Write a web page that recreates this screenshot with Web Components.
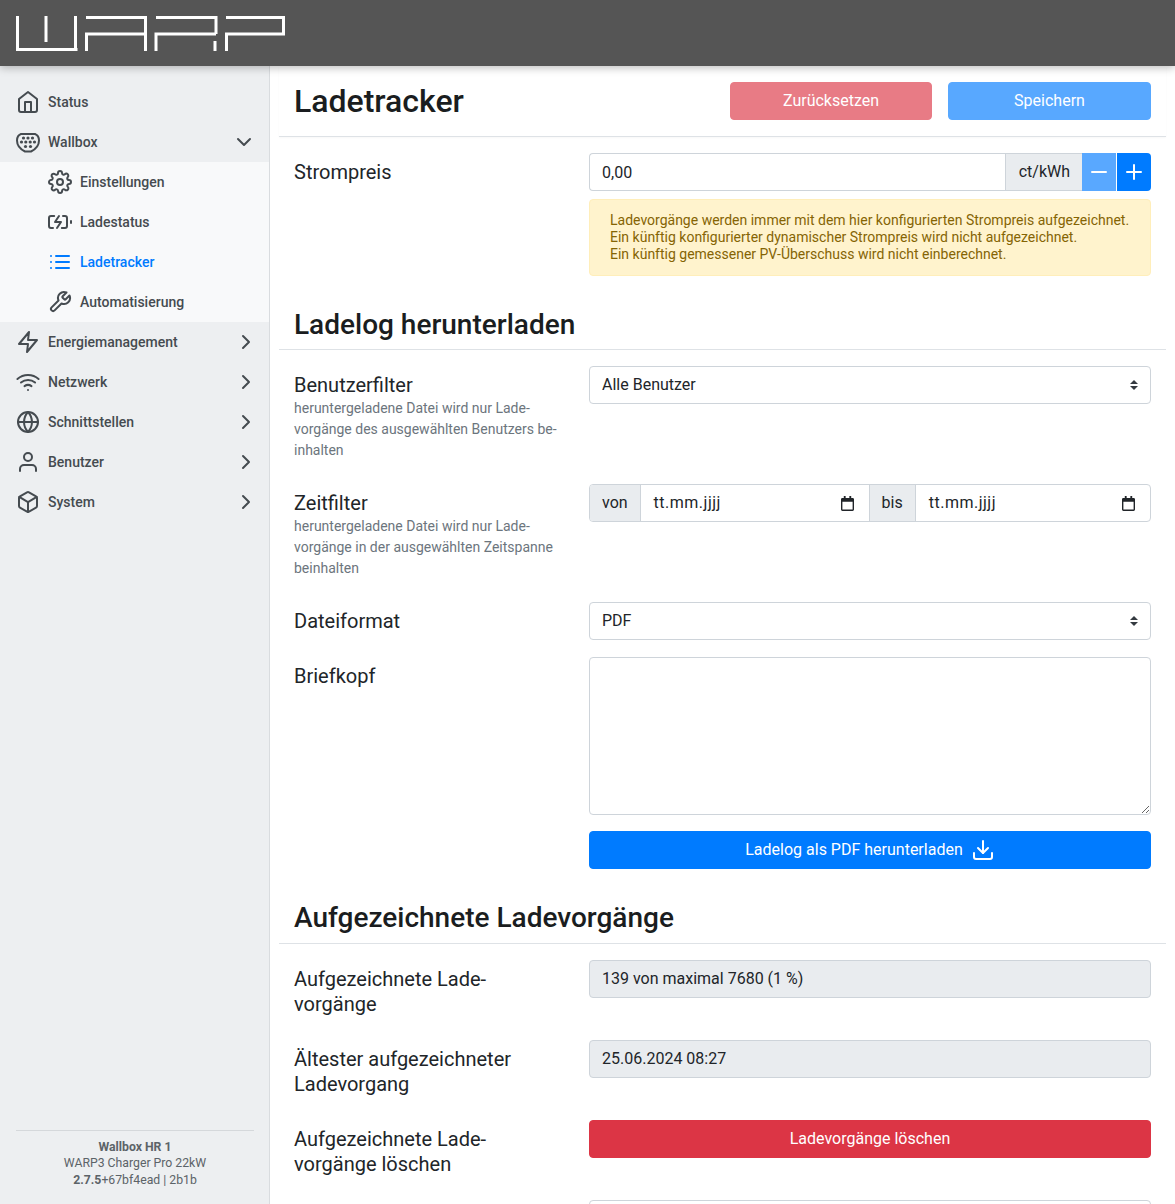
<!DOCTYPE html>
<html lang="de">
<head>
<meta charset="utf-8">
<title>Ladetracker</title>
<style>
  html, body { margin: 0; height: 100%; }
  body {
    display: flex;
    flex-direction: column;
    height: 100vh;
    overflow: hidden;
    font-family: Roboto, "Liberation Sans", sans-serif;
    font-size: 16px;
    color: #212529;
    background: #fff;
  }
  .layout { display: flex; flex: 1; min-height: 0; }
</style>
</head>
<body>
  <app-header></app-header>
  <div class="layout">
    <side-bar>
      <nav-item icon="home">Status</nav-item>
      <nav-item icon="plug" chevron="down">Wallbox</nav-item>
      <nav-group>
        <nav-item icon="settings" sub>Einstellungen</nav-item>
        <nav-item icon="battery" sub>Ladestatus</nav-item>
        <nav-item icon="list" sub active>Ladetracker</nav-item>
        <nav-item icon="tool" sub>Automatisierung</nav-item>
      </nav-group>
      <nav-item icon="zap" chevron="right">Energiemanagement</nav-item>
      <nav-item icon="wifi" chevron="right">Netzwerk</nav-item>
      <nav-item icon="globe" chevron="right">Schnittstellen</nav-item>
      <nav-item icon="user" chevron="right">Benutzer</nav-item>
      <nav-item icon="box" chevron="right">System</nav-item>
      <side-footer slot="footer"></side-footer>
    </side-bar>
    <main-panel>
      <page-title title="Ladetracker"></page-title>
      <form-row label="Strompreis">
        <price-input></price-input>
        <warn-box>
          Ladevorgänge werden immer mit dem hier konfigurierten Strompreis aufgezeichnet.<br>
          Ein künftig konfigurierter dynamischer Strompreis wird nicht aufgezeichnet.<br>
          Ein künftig gemessener PV-Überschuss wird nicht einberechnet.
        </warn-box>
      </form-row>

      <section-head>Ladelog herunterladen</section-head>
      <form-row label="Benutzerfilter" help="heruntergeladene Datei wird nur Lade&shy;vorgänge des ausgewählten Benutzers be&shy;inhalten">
        <select-box value="Alle Benutzer"></select-box>
      </form-row>
      <form-row label="Zeitfilter" help="heruntergeladene Datei wird nur Lade&shy;vorgänge in der ausgewählten Zeitspanne beinhalten">
        <date-range></date-range>
      </form-row>
      <form-row label="Dateiformat">
        <select-box value="PDF"></select-box>
      </form-row>
      <form-row label="Briefkopf">
        <text-box></text-box>
      </form-row>
      <form-row>
        <action-button kind="primary" icon="download">Ladelog als PDF herunterladen</action-button>
      </form-row>

      <section-head>Aufgezeichnete Ladevorgänge</section-head>
      <form-row label="Aufgezeichnete Lade&shy;vorgänge">
        <read-field>139 von maximal 7680 (1 %)</read-field>
      </form-row>
      <form-row label="Ältester aufgezeichneter Ladevorgang">
        <read-field>25.06.2024 08:27</read-field>
      </form-row>
      <form-row label="Aufgezeichnete Lade&shy;vorgänge löschen">
        <action-button kind="danger">Ladevorgänge löschen</action-button>
      </form-row>
      <form-row>
        <read-field blank></read-field>
      </form-row>
    </main-panel>
  </div>

<script>
  const ICONS = {
    home: '<path d="M3 9l9-7 9 7v11a2 2 0 0 1-2 2H5a2 2 0 0 1-2-2z"/><polyline points="9 22 9 12 15 12 15 22"/>',
    plug: '<path d="M5 4h14c2.500 1 4 3.500 4 6.500 0 5-4 9-8 11H9c-4-2-8-6-8-11C1 7.500 2.500 5 5 4z"/>' +
      '<g fill="currentColor" stroke="none"><circle cx="7.500" cy="8" r="1.600"/><circle cx="12" cy="8" r="1.600"/><circle cx="16.500" cy="8" r="1.600"/><circle cx="5.500" cy="12" r="1.600"/><circle cx="9.800" cy="12" r="1.600"/><circle cx="14.200" cy="12" r="1.600"/><circle cx="18.500" cy="12" r="1.600"/><circle cx="9.500" cy="16.500" r="1.600"/><circle cx="14.500" cy="16.500" r="1.600"/></g>',
    settings: '<circle cx="12" cy="12" r="3"/><path d="M19.4 15a1.65 1.65 0 0 0 .33 1.82l.06.06a2 2 0 0 1 0 2.83 2 2 0 0 1-2.83 0l-.06-.06a1.65 1.65 0 0 0-1.82-.33 1.65 1.65 0 0 0-1 1.51V21a2 2 0 0 1-2 2 2 2 0 0 1-2-2v-.09A1.65 1.65 0 0 0 9 19.4a1.65 1.65 0 0 0-1.82.33l-.06.06a2 2 0 0 1-2.83 0 2 2 0 0 1 0-2.83l.06-.06a1.65 1.65 0 0 0 .33-1.82 1.65 1.65 0 0 0-1.51-1H3a2 2 0 0 1-2-2 2 2 0 0 1 2-2h.09A1.65 1.65 0 0 0 4.600 9a1.65 1.65 0 0 0-.33-1.82l-.06-.06a2 2 0 0 1 0-2.83 2 2 0 0 1 2.83 0l.06.06a1.65 1.65 0 0 0 1.82.33H9a1.65 1.65 0 0 0 1-1.51V3a2 2 0 0 1 2-2 2 2 0 0 1 2 2v.09a1.65 1.65 0 0 0 1 1.51 1.65 1.65 0 0 0 1.82-.33l.06-.06a2 2 0 0 1 2.83 0 2 2 0 0 1 0 2.83l-.06.06a1.65 1.65 0 0 0-.33 1.82V9a1.65 1.65 0 0 0 1.51 1H21a2 2 0 0 1 2 2 2 2 0 0 1-2 2h-.09a1.65 1.65 0 0 0-1.51 1z"/>',
    battery: '<path d="M5 18H3a2 2 0 0 1-2-2V8a2 2 0 0 1 2-2h3.190M15 6h2a2 2 0 0 1 2 2v8a2 2 0 0 1-2 2h-3.190"/><line x1="23" y1="13" x2="23" y2="11"/><polyline points="11 6 7 12 13 12 9 18"/>',
    list: '<line x1="8" y1="6" x2="21" y2="6"/><line x1="8" y1="12" x2="21" y2="12"/><line x1="8" y1="18" x2="21" y2="18"/><line x1="3" y1="6" x2="3.010" y2="6"/><line x1="3" y1="12" x2="3.010" y2="12"/><line x1="3" y1="18" x2="3.010" y2="18"/>',
    tool: '<path d="M14.700 6.300a1 1 0 0 0 0 1.400l1.600 1.600a1 1 0 0 0 1.400 0l3.770-3.770a6 6 0 0 1-7.940 7.940l-6.910 6.910a2.120 2.120 0 0 1-3-3l6.910-6.910a6 6 0 0 1 7.940-7.940l-3.760 3.760z"/>',
    zap: '<polygon points="13 2 3 14 12 14 11 22 21 10 12 10 13 2"/>',
    wifi: '<path d="M5 12.550a11 11 0 0 1 14.080 0"/><path d="M1.420 9a16 16 0 0 1 21.160 0"/><path d="M8.530 16.110a6 6 0 0 1 6.950 0"/><line x1="12" y1="20" x2="12.010" y2="20"/>',
    globe: '<circle cx="12" cy="12" r="10"/><line x1="2" y1="12" x2="22" y2="12"/><path d="M12 2a15.300 15.300 0 0 1 4 10 15.300 15.300 0 0 1-4 10 15.300 15.300 0 0 1-4-10 15.300 15.300 0 0 1 4-10z"/>',
    user: '<path d="M20 21v-2a4 4 0 0 0-4-4H8a4 4 0 0 0-4 4v2"/><circle cx="12" cy="7" r="4"/>',
    box: '<path d="M21 16V8a2 2 0 0 0-1-1.730l-7-4a2 2 0 0 0-2 0l-7 4A2 2 0 0 0 3 8v8a2 2 0 0 0 1 1.730l7 4a2 2 0 0 0 2 0l7-4A2 2 0 0 0 21 16z"/><polyline points="3.270 6.960 12 12.010 20.730 6.960"/><line x1="12" y1="22.080" x2="12" y2="12"/>',
    right: '<polyline points="9 18 15 12 9 6"/>',
    down: '<polyline points="6 9 12 15 18 9"/>',
    minus: '<line x1="5" y1="12" x2="19" y2="12"/>',
    plus: '<line x1="12" y1="5" x2="12" y2="19"/><line x1="5" y1="12" x2="19" y2="12"/>',
    download: '<path d="M21 15v4a2 2 0 0 1-2 2H5a2 2 0 0 1-2-2v-4"/><polyline points="7 10 12 15 17 10"/><line x1="12" y1="15" x2="12" y2="3"/>'
  };

  const icon = (name) => `<svg width="24" height="24" viewBox="0 0 24 24" fill="none" stroke="currentColor"
    stroke-width="2" stroke-linecap="round" stroke-linejoin="round">${ICONS[name]}</svg>`;

  // small base class, every element just renders once into its shadow root
  class ShadowEl extends HTMLElement {
    constructor() {
      super();
      this.attachShadow({ mode: "open" });
    }
    connectedCallback() {
      this.shadowRoot.innerHTML = this.template();
    }
  }

  class AppHeader extends ShadowEl {
    template() {
      return `
        <style>
          :host {
            display: flex;
            align-items: flex-start;
            flex: none;
            height: 66px;
            background: #555;
            box-shadow: 0 2px 8px rgba(0, 0, 0, .25);
            position: relative;
            z-index: 2;
          }
          svg { margin: 15px 0 0 16px; display: block; }
        </style>
        <svg width="270" height="37" viewBox="0 0 270 37" fill="none" stroke="#fff" stroke-width="3" aria-label="WARP">
          <path d="M1.500 1v33.500h60M30 1v26M59.500 1v33"/>
          <path d="M70.500 36V19h58M70 2.500h59.500V36"/>
          <path d="M140 36V19h60M140 2.500h60V19M199 26v10" />
          <path d="M210.500 36V19h57V2.500H210"/>
        </svg>`;
    }
  }

  class SideBar extends ShadowEl {
    template() {
      return `
        <style>
          :host {
            display: flex;
            flex-direction: column;
            flex: none;
            box-sizing: border-box;
            width: 270px;
            padding-top: 16px;
            background: #edeff1;
            border-right: 1px solid #d9dcdf;
          }
          nav { flex: 1; }
        </style>
        <nav><slot></slot></nav>
        <slot name="footer"></slot>`;
    }
  }

  class NavGroup extends ShadowEl {
    template() {
      return `
        <style>:host { display: block; background: #f8f9fa; }</style>
        <slot></slot>`;
    }
  }

  class NavItem extends ShadowEl {
    template() {
      const chevron = this.getAttribute("chevron");
      const active = this.hasAttribute("active");
      const sub = this.hasAttribute("sub");
      return `
        <style>
          :host {
            display: flex;
            align-items: center;
            gap: 8px;
            box-sizing: border-box;
            height: 40px;
            padding: 0 12px 0 ${sub ? 48 : 16}px;
            font-size: 14px;
            font-weight: 500;
            color: ${active ? "#007bff" : "#454b50"};
          }
          span { flex: 1; }
          svg { flex: none; display: block; }
          .chev { display: flex; margin-right: ${chevron === "down" ? 1 : -1}px; }
        </style>
        ${icon(this.getAttribute("icon"))}
        <span><slot></slot></span>
        ${chevron ? `<div class="chev">${icon(chevron)}</div>` : ""}`;
    }
  }

  class SideFooter extends ShadowEl {
    template() {
      return `
        <style>
          :host {
            display: block;
            margin: 0 15px 0 16px;
            padding: 8.600px 0 16px;
            border-top: 1px solid #d5d8db;
            font-size: 12.250px;
            line-height: 16.300px;
            text-align: center;
            color: #5c6368;
          }
          b { font-weight: 700; }
        </style>
        <b>Wallbox HR 1</b><br>
        WARP3 Charger Pro 22kW<br>
        <b>2.7.5</b>+67bf4ead | 2b1b`;
    }
  }

  class MainPanel extends ShadowEl {
    template() {
      return `
        <style>
          :host {
            display: block;
            flex: 1;
            min-width: 0;
            padding: 0 9px;
            overflow: hidden;
          }
        </style>
        <slot></slot>`;
    }
  }

  class PageTitle extends ShadowEl {
    template() {
      return `
        <style>
          :host {
            display: flex;
            align-items: center;
            gap: 16px;
            height: 70px;
            padding: 0 15px;
            margin-bottom: 16px;
            border-bottom: 1px solid #dee2e6;
            box-shadow: 0 1px 2px rgba(0, 0, 0, .03);
          }
          h1 {
            flex: 1;
            margin: 0;
            font-size: 32px;
            font-weight: 500;
            line-height: 38px;
            color: #1a1d20;
          }
          action-button { width: 203px; }
          action-button:first-of-type { width: 202px; }
        </style>
        <h1>${this.getAttribute("title")}</h1>
        <action-button kind="danger" disabled>Zurücksetzen</action-button>
        <action-button kind="primary" disabled>Speichern</action-button>`;
    }
  }

  class SectionHead extends ShadowEl {
    template() {
      return `
        <style>
          :host {
            display: block;
            padding: 16px 15px 7.400px;
            margin-bottom: 16px;
            border-bottom: 1px solid #dee2e6;
            font-size: 28px;
            font-weight: 500;
            line-height: 34px;
            color: #1a1d20;
          }
        </style>
        <slot></slot>`;
    }
  }

  class FormRow extends ShadowEl {
    template() {
      const label = this.getAttribute("label") || "";
      const help = this.getAttribute("help");
      return `
        <style>
          :host {
            display: grid;
            grid-template-columns: 265px minmax(0, 1fr);
            column-gap: 30px;
            padding: 0 15px;
            margin-bottom: 16px;
          }
          .lbl { padding: 7px 0; font-size: 20px; line-height: 25px; color: #212529; hyphens: manual; }
          .help { font-size: 14px; line-height: 21px; color: #6c757d; }
          .ctl { min-width: 0; }
        </style>
        <div class="lbl">${label}${help ? `<div class="help">${help}</div>` : ""}</div>
        <div class="ctl"><slot></slot></div>`;
    }
  }

  class PriceInput extends ShadowEl {
    template() {
      return `
        <style>
          :host { display: flex; height: 38px; font-size: 16px; line-height: 24px; color: #212529; }
          .val {
            flex: 1;
            padding: 7px 12px 5px;
            border: 1px solid #ced4da;
            border-right: 0;
            border-radius: 4px 0 0 4px;
            background: #fff;
          }
          .unit {
            padding: 6px 12px 6px 12.600px;
            background: #e9ecef;
            border: 1px solid #ced4da;
            border-right: 0;
          }
          .step {
            display: flex;
            align-items: center;
            justify-content: center;
            width: 34px;
            color: #fff;
            background: #007bff;
          }
          .off { background: #59a8ff; margin-right: 1px; }
          .on { border-radius: 0 4px 4px 0; }
        </style>
        <div class="val">0,00</div>
        <div class="unit">ct/kWh</div>
        <div class="step off">${icon("minus")}</div>
        <div class="step on">${icon("plus")}</div>`;
    }
  }

  class WarnBox extends ShadowEl {
    template() {
      return `
        <style>
          :host {
            display: block;
            margin-top: 8px;
            padding: 12px 20px;
            background: #fff3cd;
            border: 1px solid #ffeeba;
            border-radius: 4px;
            font-size: 14px;
            line-height: 17px;
            color: #856404;
          }
        </style>
        <slot></slot>`;
    }
  }

  class SelectBox extends ShadowEl {
    template() {
      const arrow = "data:image/svg+xml,%3csvg xmlns='http://www.w3.org/2000/svg' width='4' height='5' viewBox='0 0 4 5'%3e%3cpath fill='%23343a40' d='M2 0L0 2h4zm0 5L0 3h4z'/%3e%3c/svg%3e";
      return `
        <style>
          :host { display: block; }
          select {
            display: block;
            box-sizing: border-box;
            width: 100%;
            height: 38px;
            padding: 6px 28px 6px 12px;
            appearance: none;
            font: 16px/24px Roboto, "Liberation Sans", sans-serif;
            color: #212529;
            background: #fff url("${arrow}") no-repeat right 12px center / 8px 10px;
            border: 1px solid #ced4da;
            border-radius: 4px;
          }
        </style>
        <select><option>${this.getAttribute("value")}</option></select>`;
    }
  }

  class DateRange extends ShadowEl {
    template() {
      const cal = `<svg width="13" height="15" viewBox="0 0 14 16"><path fill="#212529" d="M3 0h2v2h4V0h2v2h1.500A1.500 1.500 0 0 1 14 3.500v11a1.500 1.500 0 0 1-1.500 1.500h-11A1.500 1.500 0 0 1 0 14.500v-11A1.500 1.500 0 0 1 1.500 2H3zM1.500 6v8.500h11V6z"/></svg>`;
      const field = (cls) => `<div class="date ${cls}"><span>tt.mm.jjjj</span>${cal}</div>`;
      return `
        <style>
          :host {
            display: flex;
            box-sizing: border-box;
            height: 38px;
            border: 1px solid #ced4da;
            border-radius: 4px;
            overflow: hidden;
            font-size: 16px;
            line-height: 24px;
            color: #212529;
          }
          .tag {
            padding: 6px 12px;
            background: #e9ecef;
            border-right: 1px solid #ced4da;
          }
          .date {
            display: flex;
            align-items: center;
            justify-content: space-between;
            padding: 0 15px 0 13px;
            letter-spacing: .5px;
          }
          .first { flex: 0 0 228px; box-sizing: border-box; }
          .second { flex: 1; padding-right: 15px; }
          .date + .tag { border-left: 1px solid #ced4da; }
          svg { flex: none; }
        </style>
        <div class="tag">von</div>${field("first")}
        <div class="tag">bis</div>${field("second")}`;
    }
  }

  class TextBox extends ShadowEl {
    template() {
      return `
        <style>
          :host { display: block; }
          textarea {
            display: block;
            box-sizing: border-box;
            width: 100%;
            height: 158px;
            border: 1px solid #ced4da;
            border-radius: 4px;
            background: #fff;
            outline: none;
          }
        </style>
        <textarea></textarea>`;
    }
  }

  class ActionButton extends ShadowEl {
    template() {
      const danger = this.getAttribute("kind") === "danger";
      const name = this.getAttribute("icon");
      return `
        <style>
          :host { display: block; }
          button {
            display: flex;
            align-items: center;
            justify-content: center;
            gap: 8px;
            box-sizing: border-box;
            width: 100%;
            height: 38px;
            padding: 0 12px;
            font: 16px/24px Roboto, "Liberation Sans", sans-serif;
            color: #fff;
            background: ${danger ? "#dc3545" : "#007bff"};
            border: 1px solid ${danger ? "#dc3545" : "#007bff"};
            border-radius: 4px;
          }
          :host([disabled]) button { opacity: .65; }
          svg { display: block; }
        </style>
        <button><span><slot></slot></span>${name ? icon(name) : ""}</button>`;
    }
  }

  class ReadField extends ShadowEl {
    template() {
      const blank = this.hasAttribute("blank");
      return `
        <style>
          :host {
            display: block;
            box-sizing: border-box;
            height: 38px;
            padding: 6px 12px;
            font-size: 16px;
            line-height: 24px;
            color: #212529;
            background: ${blank ? "#fff" : "#e9ecef"};
            border: 1px solid #ced4da;
            border-radius: 4px;
          }
        </style>
        <slot></slot>`;
    }
  }

  customElements.define("app-header", AppHeader);
  customElements.define("side-bar", SideBar);
  customElements.define("nav-group", NavGroup);
  customElements.define("nav-item", NavItem);
  customElements.define("side-footer", SideFooter);
  customElements.define("main-panel", MainPanel);
  customElements.define("page-title", PageTitle);
  customElements.define("section-head", SectionHead);
  customElements.define("form-row", FormRow);
  customElements.define("price-input", PriceInput);
  customElements.define("warn-box", WarnBox);
  customElements.define("select-box", SelectBox);
  customElements.define("date-range", DateRange);
  customElements.define("text-box", TextBox);
  customElements.define("action-button", ActionButton);
  customElements.define("read-field", ReadField);
</script>
</body>
</html>
